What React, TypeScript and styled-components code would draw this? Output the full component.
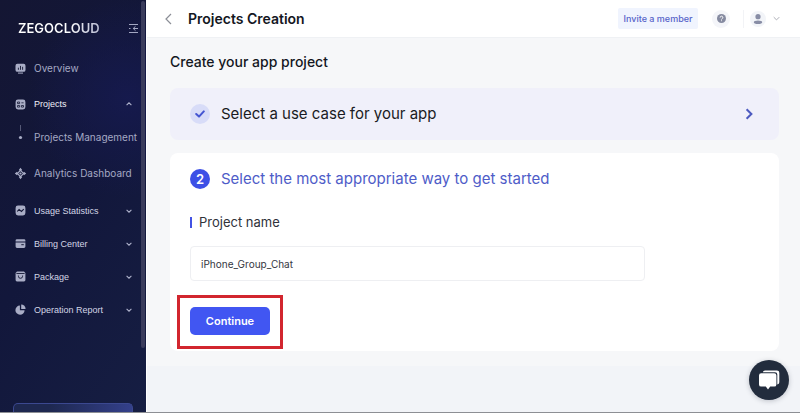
import React from 'react';
import styled, { createGlobalStyle } from 'styled-components';

const display = '"Inter", "Open Sans", sans-serif';
const plain = '"Liberation Sans", Arial, sans-serif';

const GlobalStyle = createGlobalStyle`
  *, *::before, *::after { box-sizing: border-box; }
  html, body, #root { height: 100%; }
  body { margin: 0; overflow: hidden; font-family: ${display}; color: #14171f; background: #f2f4f8; }
  button, input { font: inherit; color: inherit; margin: 0; }
  button { border: 0; padding: 0; background: none; cursor: pointer; }
  h1, h2, h3, p, ul { margin: 0; padding: 0; font-weight: inherit; }
  svg { display: block; flex: none; }
`;

const Shell = styled.div`
  display: flex;
  height: 100vh;
  border-bottom: 1px solid #8d8f94;
`;

const Sidebar = styled.aside`
  position: relative;
  flex: 0 0 146px;
  display: flex;
  flex-direction: column;
  overflow: hidden;
  background:
    radial-gradient(circle at 128px 98px, rgba(22, 26, 80, 0.85), rgba(22, 26, 80, 0) 100px),
    linear-gradient(125deg, #141633 0%, #12173b 50%, #161e43 100%);
`;

const ScrollThumb = styled.div`
  position: absolute;
  top: 1px;
  right: 1px;
  width: 4px;
  height: 347px;
  border-radius: 2px;
  background: #3a3c5c;
`;

const Brand = styled.div`
  display: flex;
  align-items: center;
  justify-content: space-between;
  height: 50px;
  padding: 6px 7px 0 18px;
`;

const Wordmark = styled.a`
  font: 600 13px/16px ${display};
  background: linear-gradient(90deg, #ffffff 60%, #b9bcd3);
  background-clip: text;
  color: transparent;
  text-decoration: none;
`;

const Menu = styled.nav`
  display: flex;
  flex-direction: column;
  padding-right: 14px;
`;

const MenuItem = styled.a<{ $height: number; $display?: boolean; $active?: boolean }>`
  display: flex;
  align-items: center;
  height: ${p => p.$height}px;
  padding-left: 15px;
  gap: 8px;
  font: 400 ${p => (p.$display ? 10 : 9)}px/14px ${p => (p.$display ? display : plain)};
  color: ${p => (p.$active ? '#f0f1f8' : p.$display ? '#a5a9c4' : '#d3d6e6')};
  text-decoration: none;
  white-space: nowrap;
`;

const MenuGlyph = styled.svg`
  color: #a9adc6;
`;

const MenuLabel = styled.span`
  flex: 1;
`;

const BottomPanel = styled.div`
  flex: none;
  height: 9px;
  margin: auto 13px 0;
  border: 1px solid #3b4890;
  border-bottom: 0;
  border-radius: 5px 5px 0 0;
  background: linear-gradient(100deg, #1e2850 30%, #34408b);
`;

const Main = styled.div`
  flex: 1;
  min-width: 0;
  display: flex;
  flex-direction: column;
  border-left: 1px solid #ffffff;
  background: #f2f4f8;
`;

const TopBar = styled.header`
  flex: none;
  display: flex;
  align-items: center;
  height: 38px;
  padding: 0 20px 0 17px;
  background: #ffffff;
  border-bottom: 1px solid #eff1f4;
`;

const BackButton = styled.button`
  margin-right: 14px;
`;

const PageTitle = styled.h1`
  font: 600 14px/20px ${display};
  margin-right: auto;
`;

const InviteButton = styled.button`
  height: 21px;
  width: 80px;
  margin-right: 14px;
  border-radius: 2px;
  background: #f0f4fe;
  color: #5663c9;
  font: 500 9px/12px ${display};
  white-space: nowrap;
`;

const RoundButton = styled.button`
  display: grid;
  place-items: center;
  width: 18px;
  height: 18px;
  border-radius: 50%;
  background: #f4f5f9;
`;

const Account = styled.button`
  display: flex;
  align-items: center;
  gap: 7px;
  height: 18px;
  margin-left: 13px;
  padding-left: 6px;
  border-left: 1px solid #f2f3f6;
`;

const Avatar = styled.span`
  display: grid;
  place-items: center;
  width: 16px;
  height: 16px;
  border-radius: 50%;
  background: #f2f4f8;
`;

const Content = styled.main`
  flex: none;
  display: flex;
  flex-direction: column;
  padding: 14px 21px 15px 23px;
  background: #f6f7f9;
`;

const SectionTitle = styled.h2`
  font: 500 14px/20px ${display};
  margin-bottom: 16px;
`;

const StepCard = styled.section<{ $done?: boolean }>`
  border-radius: 8px;
  padding: ${p => (p.$done ? '0 24px 0 20px' : '10px 20px 16px')};
  margin-bottom: ${p => (p.$done ? 13 : 0)}px;
  background: ${p => (p.$done ? '#f0f0fa' : '#ffffff')};
`;

const StepHeader = styled.div<{ $done?: boolean }>`
  display: flex;
  align-items: center;
  gap: 11px;
  height: ${p => (p.$done ? 52 : 32)}px;
  color: ${p => (p.$done ? '#191b23' : '#4e5cc8')};
`;

const StepBadge = styled.span<{ $done?: boolean }>`
  display: grid;
  place-items: center;
  width: 20px;
  height: 20px;
  border-radius: 50%;
  background: ${p => (p.$done ? '#d8dcf8' : '#3d50e6')};
  color: #ffffff;
  font: 600 13px/20px ${display};
`;

const StepTitle = styled.h3`
  flex: 1;
  font: 400 15px/20px ${display};
`;

const Form = styled.form`
  display: flex;
  flex-direction: column;
  align-items: flex-start;
  padding-top: 17px;
`;

const FieldLabel = styled.label`
  display: flex;
  align-items: center;
  gap: 7px;
  margin-bottom: 14px;
  font: 400 13px/20px ${display};
  color: #30323a;

  &::before {
    content: '';
    width: 2px;
    height: 11px;
    background: #4353e4;
  }
`;

const TextInput = styled.input`
  width: 80%;
  height: 35px;
  padding: 0 10px;
  border: 1px solid #eeeff2;
  border-radius: 4px;
  outline: none;
  background: #ffffff;
  color: #35373f;
  font: 400 10px/14px ${display};
`;

const Action = styled.div`
  position: relative;
  margin-top: 26px;
`;

const PrimaryButton = styled.button`
  display: block;
  width: 80px;
  height: 28px;
  border-radius: 5px;
  background: #4156f2;
  color: #ffffff;
  font: 600 11px/16px ${display};
`;

const Highlight = styled.div`
  position: absolute;
  inset: -12px -13px -14px;
  border: 3px solid #d2262f;
  pointer-events: none;
`;

const ChatButton = styled.button`
  position: fixed;
  right: 11px;
  bottom: 13px;
  display: grid;
  place-items: center;
  width: 40px;
  height: 40px;
  border-radius: 50%;
  background: #222c3d;
  box-shadow: 0 1px 5px rgba(30, 40, 60, 0.25);
`;

type Direction = 'up' | 'down' | 'left' | 'right';

const chevrons: Record<Direction, string> = {
  up: 'M1 7 5 3 9 7',
  down: 'M1 3 5 7 9 3',
  left: 'M7 0 2 5 7 10',
  right: 'M3 1 7 5 3 9',
};

function Chevron({ to, size, color, weight = 1.5 }: { to: Direction; size: number; color: string; weight?: number }) {
  return (
    <svg width={size} height={size} viewBox="0 0 10 10" fill="none" stroke={color} strokeWidth={weight} overflow="visible" aria-hidden>
      <path d={chevrons[to]} />
    </svg>
  );
}

const ink = '#151936';

const glyphs = {
  overview: (
    <>
      <path fill="currentColor" d="M2.4.8h6.2a1.9 1.9 0 0 1 1.9 1.9v4.2a1.9 1.9 0 0 1-1.9 1.9H2.4A1.9 1.9 0 0 1 .5 6.9V2.7A1.9 1.9 0 0 1 2.4.8Z" />
      <path stroke="currentColor" d="M3 10.1h5" />
      <path stroke={ink} strokeWidth=".9" d="M3.4 4.7v2.1M5.5 2.9v3.9M7.6 3.8v3" />
    </>
  ),
  projects: (
    <>
      <rect x=".6" y=".6" width="9.8" height="9.8" rx="2.4" fill="currentColor" />
      <path stroke={ink} strokeWidth=".8" fill="none" d="M2.5 3h2.100v1.600H2.500zM6.400 3.800h2.200M2.500 6.500h2.100v1.600H2.500zM6.400 6.500h2.100v1.600H6.400z" />
    </>
  ),
  analytics: (
    <>
      <path fill="none" stroke="currentColor" strokeWidth="1.1" d="M5.5 2.3 8.7 5.5 5.5 8.7 2.3 5.5Z" />
      <circle cx="5.5" cy="5.5" r="1.1" fill="currentColor" />
      <path fill="currentColor" d="M5.5-.2 7.2 2 5.5 3.2 3.8 2ZM5.5 11.2 3.8 9l1.7-1.2L7.2 9ZM-.2 5.5 2 3.8l1.2 1.7L2 7.2ZM11.2 5.5 9 7.2 7.8 5.5 9 3.8Z" />
    </>
  ),
  usage: (
    <>
      <rect x=".6" y=".6" width="9.8" height="9.8" rx="2.4" fill="currentColor" />
      <path fill="none" stroke={ink} strokeWidth="1.1" d="M2.2 6.5 4.1 4.4 6.4 6.4 8.8 4.1" />
    </>
  ),
  billing: (
    <>
      <path fill="currentColor" d="M2 1.2h7a1.4 1.4 0 0 1 1.4 1.4v1H.6v-1A1.4 1.4 0 0 1 2 1.2ZM.6 4.5h9.8v4A1.4 1.4 0 0 1 9 9.9H2A1.4 1.4 0 0 1 .6 8.5Z" />
      <path stroke={ink} strokeWidth="1" d="M6.3 6.7h2.5" />
    </>
  ),
  package: (
    <>
      <path fill="currentColor" d="M2 .5h7L10.4 2v7A1.5 1.5 0 0 1 9 10.5H2A1.5 1.5 0 0 1 .6 9V2Z" />
      <path fill="none" stroke={ink} strokeWidth=".9" d="M1.4 2.5h8.2M3.4 4.5v.7a2.1 2.1 0 0 0 4.2 0v-.7" />
    </>
  ),
  report: (
    <>
      <path fill="currentColor" d="M4.9 1.5v4.7h4.700A4.600 4.600 0 1 1 4.900 1.500Z" />
      <path fill="currentColor" d="M6.200.4a4.500 4.500 0 0 1 4.400 4.500H6.200Z" />
    </>
  ),
  sub: (
    <>
      <path stroke="#555976" strokeWidth="1" d="M5.500-7v6" />
      <circle cx="5.500" cy="5.500" r="1.600" fill="currentColor" />
    </>
  ),
};

function MenuIcon({ name }: { name: keyof typeof glyphs }) {
  return (
    <MenuGlyph width="11" height="11" viewBox="0 0 11 11" overflow="visible" aria-hidden>
      {glyphs[name]}
    </MenuGlyph>
  );
}

interface Entry {
  label: string;
  icon: keyof typeof glyphs;
  height: number;
  display?: boolean;
  active?: boolean;
  toggle?: 'up' | 'down';
}

const entries: Entry[] = [
  { label: 'Overview', icon: 'overview', height: 36, display: true },
  { label: 'Projects', icon: 'projects', height: 36, active: true, toggle: 'up' },
  { label: 'Projects Management', icon: 'sub', height: 30, display: true },
  { label: 'Analytics Dashboard', icon: 'analytics', height: 42, display: true },
  { label: 'Usage Statistics', icon: 'usage', height: 33, toggle: 'down' },
  { label: 'Billing Center', icon: 'billing', height: 33, toggle: 'down' },
  { label: 'Package', icon: 'package', height: 33, toggle: 'down' },
  { label: 'Operation Report', icon: 'report', height: 33, toggle: 'down' },
];

export default function App() {
  return (
    <>
      <GlobalStyle />
      <Shell>
        <Sidebar>
          <Brand>
            <Wordmark href="#">ZEGOCLOUD</Wordmark>
            <button aria-label="Collapse menu">
              <svg width="11" height="11" viewBox="0 0 11 11" fill="none" stroke="#a3a7c2" strokeWidth="1">
                <path d="M1 1.5h9M1 9.5h9M1 5.5h1.5M5 5.5h5M7.5 3.3 5.2 5.5l2.3 2.2" />
              </svg>
            </button>
          </Brand>
          <Menu>
            {entries.map(e => (
              <MenuItem key={e.label} href="#" $height={e.height} $display={e.display} $active={e.active}>
                <MenuIcon name={e.icon} />
                <MenuLabel>{e.label}</MenuLabel>
                {e.toggle && <Chevron to={e.toggle} size={6} color="#aeb2cb" weight={1.8} />}
              </MenuItem>
            ))}
          </Menu>
          <BottomPanel />
          <ScrollThumb />
        </Sidebar>
        <Main>
          <TopBar>
            <BackButton aria-label="Back">
              <Chevron to="left" size={10} color="#8b8e96" weight={1.2} />
            </BackButton>
            <PageTitle>Projects Creation</PageTitle>
            <InviteButton>Invite a member</InviteButton>
            <RoundButton aria-label="Help">
              <svg width="9" height="9" viewBox="0 0 10 10">
                <circle cx="5" cy="5" r="5" fill="#858aa0" />
                <path d="M3.500 4A1.500 1.500 0 1 1 5.500 5.300Q5 5.500 5 6.100M5 7v1" fill="none" stroke="#fff" strokeWidth="1" />
              </svg>
            </RoundButton>
            <Account aria-label="Account">
              <Avatar>
                <svg width="10" height="10" viewBox="0 0 10 10" fill="#888da5">
                  <circle cx="5" cy="2.700" r="2.600" />
                  <ellipse cx="5" cy="8.200" rx="4.200" ry="1.800" />
                </svg>
              </Avatar>
              <Chevron to="down" size={7} color="#a4a7b0" weight={1.3} />
            </Account>
          </TopBar>
          <Content>
            <SectionTitle>Create your app project</SectionTitle>
            <StepCard $done>
              <StepHeader $done>
                <StepBadge $done>
                  <svg width="10" height="8" viewBox="0 0 10 8" fill="none" stroke="#4455d2" strokeWidth="2" strokeLinecap="round" strokeLinejoin="round">
                    <path d="M1.200 4 4 6.600 8.800 1.400" />
                  </svg>
                </StepBadge>
                <StepTitle>Select a use case for your app</StepTitle>
                <button aria-label="Open step 1">
                  <Chevron to="right" size={12} color="#4c5ac0" weight={1.7} />
                </button>
              </StepHeader>
            </StepCard>
            <StepCard>
              <StepHeader>
                <StepBadge>2</StepBadge>
                <StepTitle>Select the most appropriate way to get started</StepTitle>
              </StepHeader>
              <Form onSubmit={e => e.preventDefault()}>
                <FieldLabel htmlFor="project-name">Project name</FieldLabel>
                <TextInput id="project-name" defaultValue="iPhone_Group_Chat" spellCheck={false} />
                <Action>
                  <PrimaryButton type="submit">Continue</PrimaryButton>
                  <Highlight />
                </Action>
              </Form>
            </StepCard>
          </Content>
        </Main>
      </Shell>
      <ChatButton aria-label="Open chat">
        <svg width="22" height="20" viewBox="0 0 22 20">
          <path fill="#fff" d="M7 .5h12a2.300 2.300 0 0 1 2.300 2.300v9.500q0 1.800-2 2.200V4.500a2.300 2.300 0 0 0-2.300-2.300H4.800Q5.200.5 7 .5Z" />
          <path fill="#fff" d="M3.200 3.200h13a2.200 2.200 0 0 1 2.200 2.200v9a2.200 2.200 0 0 1-2.200 2.200h-4L10 19.500 7.800 16.600H3.200A2.200 2.200 0 0 1 1 14.400v-9a2.200 2.200 0 0 1 2.200-2.200Z" />
        </svg>
      </ChatButton>
    </>
  );
}
